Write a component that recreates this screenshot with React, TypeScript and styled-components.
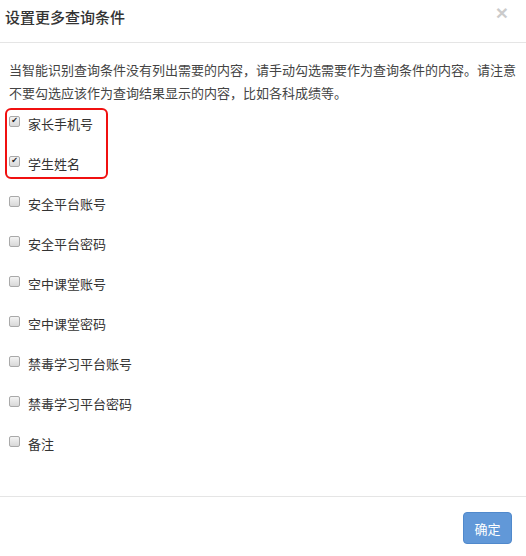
import React from 'react'
import styled, { createGlobalStyle } from 'styled-components'

const GlobalStyle = createGlobalStyle`
  *, *::before, *::after {
    box-sizing: border-box;
  }
  html, body {
    margin: 0;
    padding: 0;
    background: #fff;
  }
  body {
    font-family: "Noto Sans CJK SC", "Liberation Sans", sans-serif;
    color: #333;
  }
`

const Modal = styled.div`
  width: 526px;
  height: 556px;
  display: flex;
  flex-direction: column;
  background: #fff;
`

const Header = styled.div`
  height: 43px;
  padding: 0 5px;
  display: flex;
  align-items: flex-start;
  justify-content: space-between;
  border-bottom: 1px solid #e5e5e5;
`

const Title = styled.h4`
  margin: 7px 0 0;
  font-size: 15px;
  line-height: 19px;
  font-weight: 500;
  color: #333;
`

const Close = styled.button`
  margin: 2px 13px 0 0;
  padding: 0;
  border: 0;
  background: transparent;
  font-family: "Liberation Sans", sans-serif;
  font-size: 21px;
  font-weight: bold;
  line-height: 1;
  color: #000;
  opacity: 0.2;
  text-shadow: 0 1px 0 #fff;
  cursor: pointer;
`

const Body = styled.div`
  flex: 1;
  padding: 15px 9px 0;
`

const Hint = styled.p`
  margin: 0;
  font-size: 13px;
  line-height: 23px;
  color: #444;
`

const List = styled.div`
  position: relative;
  margin-top: -1px;
  display: flex;
  flex-direction: column;
`

const Row = styled.label`
  height: 40px;
  display: flex;
  align-items: center;
  gap: 8px;
  font-size: 13px;
  color: #333;
  cursor: pointer;
`

const Box = styled.span<{ $checked: boolean }>`
  width: 11px;
  height: 11px;
  margin-top: -4px;
  flex: none;
  border: 1px solid #a9a9a9;
  border-radius: 2px;
  background: linear-gradient(#f4f4f4, #d8d8d8);
  display: flex;
  align-items: center;
  justify-content: center;
  font-family: "DejaVu Sans", sans-serif;
  font-size: 8px;
  line-height: 1;
  color: #222;
  &::after {
    content: '${({ $checked }) => ($checked ? '✔' : '')}';
  }
`

const Highlight = styled.div`
  position: absolute;
  left: -4px;
  top: 5px;
  width: 103px;
  height: 71px;
  border: 2px solid #f01010;
  border-radius: 6px;
  pointer-events: none;
`

const Footer = styled.div`
  height: 60px;
  padding: 15px 14px 0 0;
  display: flex;
  justify-content: flex-end;
  align-items: flex-start;
  border-top: 1px solid #e5e5e5;
`

const Button = styled.button`
  width: 49px;
  height: 32px;
  border: 1px solid #5089cc;
  border-radius: 4px;
  background: #6198d8;
  color: #fff;
  font-family: "Noto Sans CJK SC", sans-serif;
  font-size: 13px;
  cursor: pointer;
`

const fields = [
  { name: '家长手机号', checked: true },
  { name: '学生姓名', checked: true },
  { name: '安全平台账号', checked: false },
  { name: '安全平台密码', checked: false },
  { name: '空中课堂账号', checked: false },
  { name: '空中课堂密码', checked: false },
  { name: '禁毒学习平台账号', checked: false },
  { name: '禁毒学习平台密码', checked: false },
  { name: '备注', checked: false },
]

export default function App() {
  return (
    <>
      <GlobalStyle />
      <Modal>
        <Header>
          <Title>设置更多查询条件</Title>
          <Close aria-label="关闭">×</Close>
        </Header>
        <Body>
          <Hint>
            当智能识别查询条件没有列出需要的内容，请手动勾选需要作为查询条件的内容。请注意不要勾选应该作为查询结果显示的内容，比如各科成绩等。
          </Hint>
          <List>
            {fields.map((f) => (
              <Row key={f.name}>
                <Box $checked={f.checked} />
                {f.name}
              </Row>
            ))}
            <Highlight />
          </List>
        </Body>
        <Footer>
          <Button>确定</Button>
        </Footer>
      </Modal>
    </>
  )
}
